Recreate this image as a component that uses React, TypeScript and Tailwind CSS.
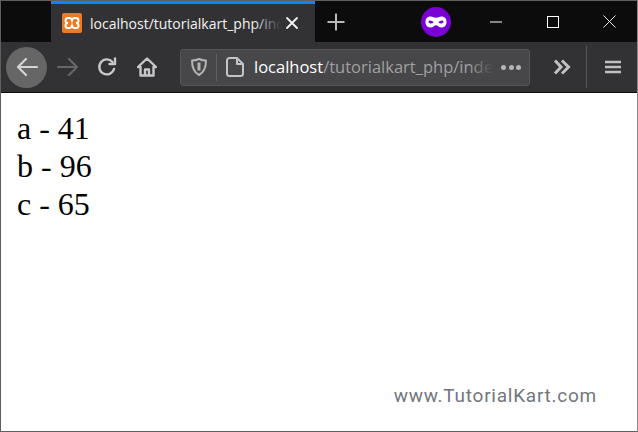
export default function App() {
  return (
    <div className="flex h-[432px] w-[638px] flex-col overflow-hidden border border-[#5f5f5f] border-r-[#8a8a8a] bg-white font-['Open_Sans',sans-serif]">
      {/* tab strip */}
      <div className="flex h-[41px] shrink-0 bg-[#0c0c0d]">
        <div className="w-[50px]" />
        <div className="flex h-[41px] w-[264px] items-center border-t-[3px] border-[#0a84ff] bg-[#323234] pl-[11px]">
          <svg width="20" height="20" viewBox="0 0 20 20" className="shrink-0">
            <rect width="20" height="20" rx="2" fill="#ee7a22" />
            <path d="M6 5h2c1 0 1.500 1 2 2.500C10.500 6 11 5 12 5h2c1.500 0 2.500 1.200 2.500 2.500S15.500 10 14 10c1.500 0 2.500 1.200 2.500 2.500S15.500 15 14 15h-2c-1 0-1.500-1-2-2.500-.5 1.500-1 2.500-2 2.500H6c-1.500 0-2.500-1.200-2.500-2.500S4.500 10 6 10C4.500 10 3.500 8.800 3.500 7.500S4.500 5 6 5z" fill="none" stroke="#fff" strokeWidth="2" />
          </svg>
          <div className="relative ml-[8px] w-[191px] overflow-hidden whitespace-nowrap text-[14px] text-[#f2f2f2]">
            localhost/tutorialkart_php/index.php
            <div className="absolute inset-y-0 right-0 w-[28px] bg-gradient-to-r from-transparent to-[#323234]" />
          </div>
          <svg width="14" height="14" viewBox="0 0 14 14" className="ml-[4px] shrink-0" stroke="#f4f4f4" strokeWidth="1.800" strokeLinecap="round">
            <path d="M2 2l10 10M12 2L2 12" />
          </svg>
        </div>
        <div className="flex w-[42px] items-center justify-center">
          <svg width="18" height="18" viewBox="0 0 18 18" stroke="#b8b8b8" strokeWidth="2">
            <path d="M9 .5v17M.5 9h17" />
          </svg>
        </div>
        <div className="flex w-[94px] items-center justify-end">
          <div className="flex h-[30px] w-[30px] items-center justify-center rounded-full bg-[#7a00d6]">
            <svg width="22" height="12" viewBox="0 0 22 12">
              <path fillRule="evenodd" fill="#fff" d="M5.500.5c2.200 0 3.800 1.300 5.500 1.300S14.300.5 16.500.5C19.800.5 21.500 2.800 21.500 6c0 3.400-2 5.500-5 5.500-2.500 0-3.800-2.300-5.500-2.300S8 11.500 5.500 11.500c-3 0-5-2.100-5-5.500C.5 2.800 2.200.5 5.500.5zM5 4.500C4 4.500 3.500 5.200 3.500 6S5 7.500 6.300 7.500 8.500 7 8.500 6.300 6.500 4.500 5 4.500zM17 4.500c-1.500 0-3.500 1.100-3.500 1.800s1 1.200 2.200 1.200S18.500 6.800 18.500 6 18 4.500 17 4.500z" />
            </svg>
          </div>
        </div>
        <div className="flex flex-1 items-center justify-end text-white">
          <div className="flex w-[58px] justify-center">
            <svg width="12" height="2" viewBox="0 0 12 2"><path d="M0 1h12" stroke="#fff" strokeWidth="1" /></svg>
          </div>
          <div className="flex w-[56px] justify-center">
            <svg width="12" height="12" viewBox="0 0 12 12"><rect x=".5" y=".5" width="11" height="11" fill="none" stroke="#fff" strokeWidth="1" /></svg>
          </div>
          <div className="flex w-[56px] justify-center">
            <svg width="13" height="13" viewBox="0 0 13 13"><path d="M.5.5l12 12M12.500.5l-12 12" stroke="#e8e8e8" strokeWidth="1" /></svg>
          </div>
        </div>
      </div>

      {/* toolbar */}
      <div className="flex h-[51px] shrink-0 items-center border-b border-[#0c0c0d] bg-[#323234] pl-[5px]">
        <div className="flex h-[41px] w-[41px] items-center justify-center rounded-full bg-[#666667]">
          <svg width="22" height="22" viewBox="0 0 22 22" fill="none" stroke="#d4d4d4" strokeWidth="2.200" strokeLinecap="round" strokeLinejoin="round">
            <path d="M21 11H2M10 3l-8 8 8 8" />
          </svg>
        </div>
        <div className="ml-[10px] flex w-[22px] justify-center">
          <svg width="22" height="22" viewBox="0 0 22 22" fill="none" stroke="#666667" strokeWidth="2.200" strokeLinecap="round" strokeLinejoin="round">
            <path d="M1 11h19M12 3l8 8-8 8" />
          </svg>
        </div>
        <div className="ml-[17px] flex w-[22px] justify-center">
          <svg width="20" height="20" viewBox="0 0 20 20" fill="none" stroke="#c8c8c8" strokeWidth="2.400" strokeLinecap="round" strokeLinejoin="round">
            <path d="M15.500 5A7.500 7.500 0 1 0 17 12" />
            <path d="M18 1.500V7h-5.500" />
          </svg>
        </div>
        <div className="ml-[18px] flex w-[22px] justify-center">
          <svg width="20" height="20" viewBox="0 0 20 20" fill="none" stroke="#c8c8c8" strokeWidth="2.400" strokeLinejoin="round">
            <path d="M1 10l9-8.500L19 10h-2.500v8.500h-13V10z" />
            <path d="M8 18.500v-6h4v6" strokeWidth="2.400" />
          </svg>
        </div>

        {/* url bar */}
        <div className="ml-[22px] flex h-[37px] w-[350px] items-center rounded-[3px] border border-[#555557] bg-[#474749]">
          <div className="flex w-[35px] justify-center">
            <svg width="16" height="18" viewBox="0 0 16 18" fill="none" stroke="#b4b4b4" strokeWidth="2" strokeLinejoin="round">
              <path d="M8 1c2.500 1.200 4.500 1.500 7 1.500 0 7-1.500 11.500-7 14.500C2.500 14 1 9.500 1 2.500 3.500 2.500 5.500 2.200 8 1z" />
              <path d="M8 4.500v8" strokeWidth="3" />
            </svg>
          </div>
          <div className="h-[27px] w-px bg-[#5e6068]" />
          <div className="ml-[9px] flex w-[18px] justify-center">
            <svg width="18" height="20" viewBox="0 0 18 20" fill="none" stroke="#c4c4c4" strokeWidth="2" strokeLinejoin="round">
              <path d="M3.500 1H11l6 6v9.500a2.500 2.500 0 0 1-2.500 2.500h-11A2.500 2.500 0 0 1 1 16.500v-13A2.500 2.500 0 0 1 3.500 1z" />
              <path d="M11 1v6h6" />
            </svg>
          </div>
          <div className="relative ml-[10px] w-[239px] overflow-hidden whitespace-nowrap text-[16.500px]">
            <span className="text-white">localhost</span>
            <span className="text-[#a0a0a2]">/tutorialkart_php/index.php</span>
            <div className="absolute inset-y-0 right-0 w-[24px] bg-gradient-to-r from-transparent to-[#474749]" />
          </div>
          <div className="ml-[8px] flex gap-[2.500px]">
            <span className="h-[5px] w-[5px] rounded-full bg-[#b4b4b4]" />
            <span className="h-[5px] w-[5px] rounded-full bg-[#b4b4b4]" />
            <span className="h-[5px] w-[5px] rounded-full bg-[#b4b4b4]" />
          </div>
        </div>

        <div className="ml-[23px] flex w-[18px] justify-center">
          <svg width="18" height="16" viewBox="0 0 18 16" fill="none" stroke="#c0c0c0" strokeWidth="3">
            <path d="M2 1.500L8 8l-6 6.500M9 1.500L15.500 8 9 14.500" />
          </svg>
        </div>
        <div className="ml-[15px] h-[42px] w-px bg-[#555557]" />
        <div className="ml-[18px] flex w-[16px] justify-center">
          <svg width="16" height="14" viewBox="0 0 16 14" stroke="#c0c0c0" strokeWidth="2.400">
            <path d="M0 2h16M0 7h16M0 12h16" />
          </svg>
        </div>
      </div>

      {/* page */}
      <div className="flex min-h-0 flex-1 flex-col justify-between bg-white">
        <div className="pl-[16px] pt-[16px] font-['Liberation_Serif',serif] text-[32px] leading-[38px] text-black">
          <div>a - 41</div>
          <div>b - 96</div>
          <div>c - 65</div>
        </div>
        <div className="pb-[23px] pr-[40px] text-right font-['Roboto',sans-serif] text-[19px] font-normal leading-[24px] tracking-[0.75px] text-[#72767d]">
          www.TutorialKart.com
        </div>
      </div>
    </div>
  );
}
